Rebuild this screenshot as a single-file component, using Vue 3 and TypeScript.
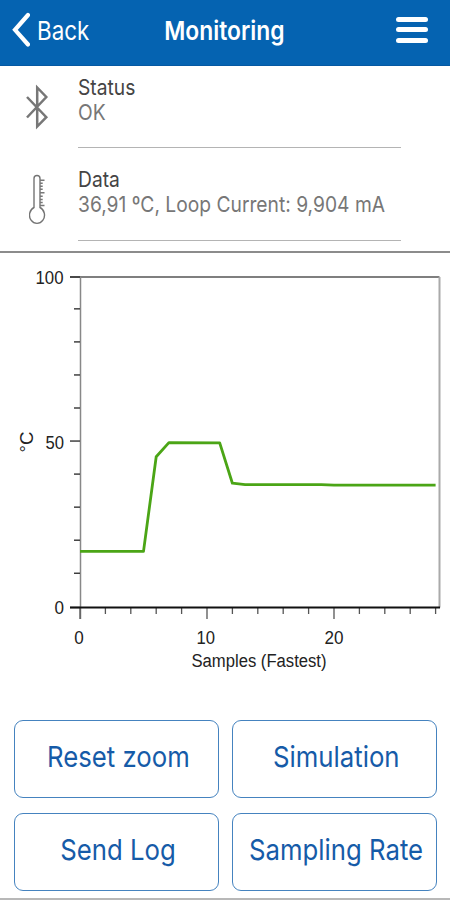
<script setup lang="ts">
interface Reading {
  id: 'status' | 'data'
  title: string
  value: string
}

interface Tick {
  pos: number
  major: boolean
}

const readings: Reading[] = [
  { id: 'status', title: 'Status', value: 'OK' },
  { id: 'data', title: 'Data', value: '36,91 ºC, Loop Current: 9,904 mA' },
]

const actions: { id: string; label: string }[] = [
  { id: 'reset', label: 'Reset zoom' },
  { id: 'simulation', label: 'Simulation' },
  { id: 'log', label: 'Send Log' },
  { id: 'rate', label: 'Sampling Rate' },
]

const plot = { left: 80.5, right: 439.5, top: 24, bottom: 354.5 }
const sampleX = (n: number): number => 80 + n * 12.7
const tempY = (t: number): number => plot.bottom - (t / 100) * (plot.bottom - plot.top)

const yTicks: Tick[] = Array.from({ length: 11 }, (_, i) => ({
  pos: tempY(i * 10) - (i > 0 && i < 10 ? 1.2 : 0),
  major: i % 5 === 0,
}))
const xTicks: Tick[] = Array.from({ length: 15 }, (_, i) => ({
  pos: sampleX(i * 2),
  major: i % 5 === 0,
}))

const samples: [number, number][] = [
  [0, 17], [5, 17], [6, 45.6], [7, 49.9], [11, 49.8], [12, 37.6], [13, 37.2], [19, 37.2], [20, 37], [28, 37],
]
const line: string = samples.map(([n, t]) => `${sampleX(n)},${tempY(t)}`).join(' ')
</script>

<template>
  <div class="screen">
    <header class="bar">
      <div class="back">
        <svg width="18" height="36" viewBox="0 0 18 36">
          <path d="M16 3 L3 17.8 L16 32.5" fill="none" stroke="#fff" stroke-width="4.2" stroke-linecap="round" stroke-linejoin="miter" />
        </svg>
        <span class="back-text">Back</span>
      </div>
      <h1 class="title">Monitoring</h1>
      <div class="menu"><i></i><i></i><i></i></div>
    </header>

    <section class="readings">
      <div v-for="r in readings" :key="r.id" class="reading" :class="r.id">
        <div class="icon">
          <svg v-if="r.id === 'status'" width="24" height="48" viewBox="0 0 24 48">
            <path d="M2 14 L21.3 34.2 L12.2 43.5 V4.5 L21.3 14 L2 34.5" fill="none" stroke="#777" stroke-width="2.5" />
          </svg>
          <svg v-else width="20" height="52" viewBox="0 0 20 52">
            <path d="M5 33.5 V4.5 Q5 1.5 8 1.5 Q11 1.5 11 4.5 V33.5 A7.5 8.3 0 1 1 5 33.5 Z" fill="none" stroke="#747474" stroke-width="1.4" />
            <path d="M11 6.3H15.5M11 9.3H13.7M11 12.3H13.7M11 15.3H13.7M11 18.8H15.5M11 22.3H13.7M11 25.5H13.7M11 28.5H13.7M11 31.5H15.5" stroke="#777" stroke-width="1.4" />
          </svg>
        </div>
        <div class="body">
          <div class="name"><span>{{ r.title }}</span></div>
          <div class="value"><span>{{ r.value }}</span></div>
        </div>
      </div>
    </section>

    <svg class="chart" width="450" height="440" viewBox="0 0 450 440">
      <path :d="`M70 ${plot.top}H${plot.right}`" stroke="#555" stroke-width="1.5" />
      <path :d="`M${plot.right} ${plot.top}V${plot.bottom}`" stroke="#aaa" stroke-width="2" />
      <path :d="`M${plot.left} ${plot.top}V366`" stroke="#888" stroke-width="1.5" />
      <line v-for="t in yTicks" :key="'y' + t.pos" :x1="t.major ? 70 : 74" :x2="80" :y1="t.pos" :y2="t.pos" stroke="#333" stroke-width="1.4" />
      <line v-for="t in xTicks" :key="'x' + t.pos" :x1="t.pos" :x2="t.pos" :y1="plot.bottom" :y2="t.major ? 366 : 361" stroke="#555" stroke-width="1.3" />
      <path :d="`M70 ${plot.bottom}H440`" stroke="#111" stroke-width="1.8" />
      <polyline :points="line" fill="none" stroke="#4ba516" stroke-width="2.8" stroke-linejoin="round" />
      <g class="scale">
        <text x="35.5" y="30.5" textLength="28" lengthAdjust="spacingAndGlyphs">100</text>
        <text x="45.5" y="195.5" textLength="18.5" lengthAdjust="spacingAndGlyphs">50</text>
        <text x="54.5" y="361" textLength="9.5" lengthAdjust="spacingAndGlyphs">0</text>
        <text x="74.3" y="391" textLength="9.5" lengthAdjust="spacingAndGlyphs">0</text>
        <text x="196.5" y="391" textLength="18.5" lengthAdjust="spacingAndGlyphs">10</text>
        <text x="324.5" y="391" textLength="19" lengthAdjust="spacingAndGlyphs">20</text>
        <text x="191.5" y="414" textLength="135" lengthAdjust="spacingAndGlyphs">Samples (Fastest)</text>
        <text class="unit" transform="translate(33.3 199.5) rotate(-90)" textLength="21" lengthAdjust="spacingAndGlyphs">°C</text>
      </g>
    </svg>

    <div class="actions">
      <button v-for="a in actions" :key="a.id" :class="['action', a.id]" type="button"><span>{{ a.label }}</span></button>
    </div>
  </div>
</template>

<style>
body {
  background: #fff;
}
</style>

<style scoped>
.screen {
  width: 450px;
  height: 900px;
  box-sizing: border-box;
  display: flex;
  flex-direction: column;
  overflow: hidden;
  background: #fff;
  border-bottom: 2px solid #b8b8b8;
  font-family: Inter, "Liberation Sans", sans-serif;
}
span {
  display: inline-block;
  white-space: nowrap;
}
.bar {
  flex: none;
  height: 66px;
  box-sizing: border-box;
  padding: 0 22px 6px 12px;
  display: grid;
  grid-template-columns: 114px 1fr 105px;
  align-items: center;
  background: #0563b1;
  border-bottom: 1px solid #0559a3;
  color: #fff;
}
.back {
  display: flex;
  align-items: center;
  gap: 7px;
}
.back-text {
  padding-top: 2px;
  font-size: 26px;
  transform: scaleX(0.86);
  transform-origin: left;
}
.title {
  margin: 0;
  padding-top: 1px;
  justify-self: center;
  font-size: 26px;
  font-weight: 600;
  transform: scaleX(0.88);
}
.menu {
  justify-self: end;
  width: 32px;
  display: grid;
  gap: 5.5px;
}
.menu i {
  height: 5px;
  border-radius: 2.5px;
  background: #fff;
}
.readings {
  flex: none;
  height: 187px;
  box-sizing: border-box;
  border-bottom: 2px solid #8c8c8c;
}
.reading {
  display: grid;
  grid-template-columns: 78px 323px;
  height: 82px;
}
.data {
  height: 93px;
}
.icon {
  padding: 17px 0 0 25px;
}
.data .icon {
  padding: 26px 0 0 29px;
}
.body {
  box-sizing: border-box;
  border-bottom: 1px solid #b4b4b4;
  padding-top: 9px;
  font-size: 22px;
  line-height: 25px;
}
.data .body {
  padding-top: 19px;
}
.name {
  color: #444;
}
.value {
  color: #777;
}
.body span {
  transform: scaleX(0.874);
  transform-origin: left;
}
.chart {
  flex: none;
  display: block;
}
.scale {
  font-family: "Liberation Sans", Arial, sans-serif;
  font-size: 18px;
  fill: #222;
}
.actions {
  display: grid;
  grid-template-columns: 205px 205px;
  grid-auto-rows: 78px;
  gap: 15px 13px;
  padding: 27px 0 0 14px;
}
.action {
  display: grid;
  place-items: center;
  padding: 0 0 5px 3px;
  border: 1.5px solid #4583bf;
  border-radius: 9px;
  background: #fff;
  color: #165ba8;
  font: 400 29px Inter, "Liberation Sans", sans-serif;
}
.action span {
  transform: scaleX(0.888);
}
</style>
